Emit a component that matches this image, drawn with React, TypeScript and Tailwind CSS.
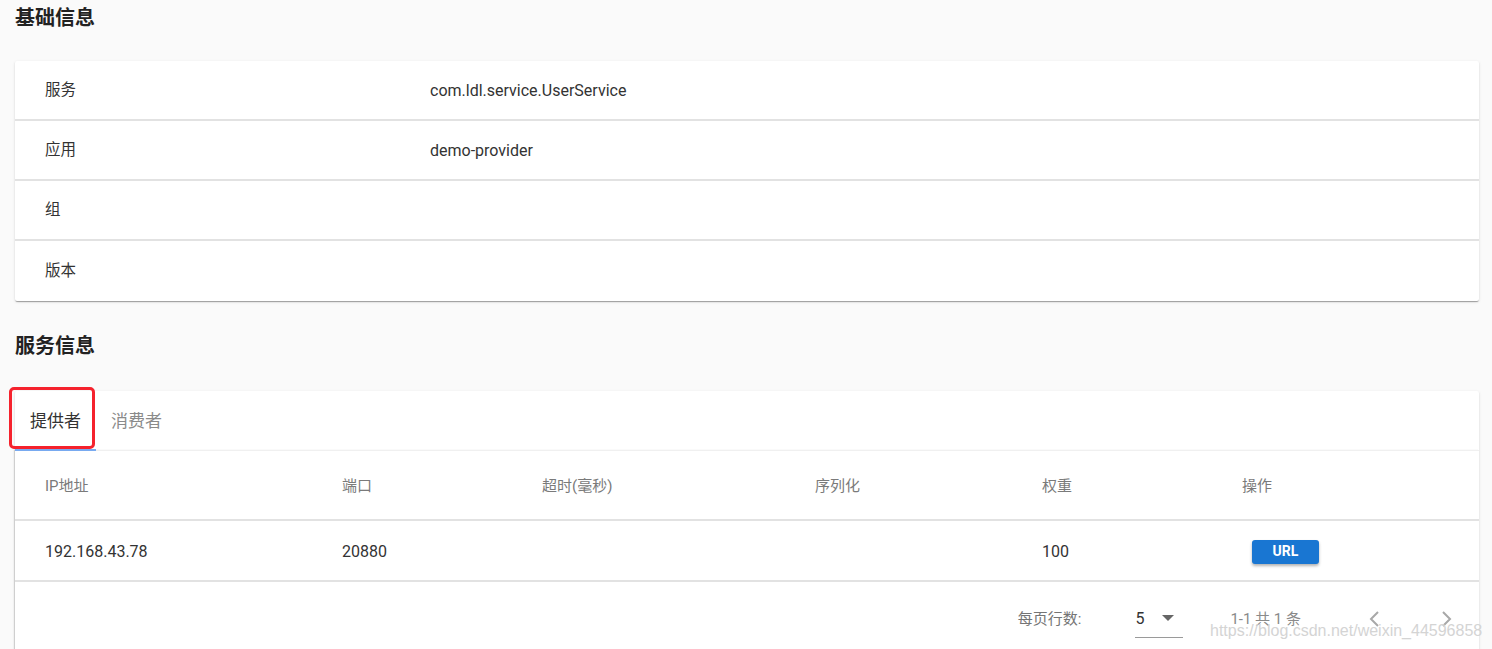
import React from "react";

const font = { fontFamily: "Roboto, 'Noto Sans CJK SC', sans-serif" };

const cardShadow =
  "shadow-[0_2px_1px_-1px_rgba(0,0,0,0.2),0_1px_1px_0_rgba(0,0,0,0.14),0_1px_3px_0_rgba(0,0,0,0.12)]";

function InfoRow({ label, value, last }: { label: string; value?: string; last?: boolean }) {
  return (
    <div
      className={`flex items-center h-[60px] pt-[2px] ${last ? "" : "border-b-2 border-[#e2e2e2]"}`}
    >
      <div className="w-[415px] pl-[30px] text-[15.5px] text-[#333]">{label}</div>
      <div className="text-[16px] text-[#333]">{value}</div>
    </div>
  );
}

export default function App() {
  const cols = ["w-[297px]", "w-[200px]", "w-[273px]", "w-[227px]", "w-[200px]", "flex-1"];
  const headers = ["IP地址", "端口", "超时(毫秒)", "序列化", "权重", "操作"];
  return (
    <div className="relative min-h-[649px] bg-[#fafafa] overflow-hidden pl-[15px] pr-[13px]" style={font}>
      <h2 className="h-[36px] pt-[5px] text-[20px] font-bold text-[#222] leading-[26px]">基础信息</h2>
      <div className="h-[25px]" />
      <div className={`bg-white rounded-[2px] ${cardShadow}`}>
        <InfoRow label="服务" value="com.ldl.service.UserService" />
        <InfoRow label="应用" value="demo-provider" />
        <InfoRow label="组" />
        <InfoRow label="版本" last />
      </div>
      <h2 className="mt-[30px] h-[30px] text-[20px] font-bold text-[#222] leading-[30px]">服务信息</h2>
      <div className="h-[30px]" />
      <div className={`bg-white rounded-[2px] ${cardShadow}`}>
        <div className="flex h-[59px] pt-[2px]">
          <div className="relative flex items-center px-[15px] text-[17px] text-[#333]">
            提供者
            <div className="absolute left-0 right-0 bottom-[-1px] h-[2px] bg-[#78aaf0]" />
          </div>
          <div className="flex items-center px-[15px] text-[17px] text-[#8a8a8a]">消费者</div>
        </div>
        <div className="shadow-[-1px_0_1px_0_rgba(0,0,0,0.12)] border-t border-[#f0f0f0]">
          <div className="flex items-center h-[70px] pt-[2px] border-b-2 border-[#e2e2e2] pl-[30px]">
            {headers.map((h, i) => (
              <div key={h} className={`${cols[i]} text-[15px] text-[#7a7a7a]`}>
                {h}
              </div>
            ))}
          </div>
          <div className="flex items-center h-[61px] pt-[2px] border-b-2 border-[#e2e2e2] pl-[30px] text-[16px] text-[#333]">
            <div className={cols[0]}>192.168.43.78</div>
            <div className={cols[1]}>20880</div>
            <div className={cols[2]}></div>
            <div className={cols[3]}></div>
            <div className={cols[4]}>100</div>
            <div className={cols[5]}>
              <button className="ml-[10px] w-[67px] h-[24px] rounded-[3px] bg-[#1976d2] text-white text-[14px] font-bold shadow-[0_2px_3px_rgba(0,0,0,0.3)]">
                URL
              </button>
            </div>
          </div>
          <div className="flex items-center justify-end h-[72px] pt-[2px] text-[15px] text-[#757575]">
            <span>每页行数:</span>
            <div className="ml-[54px] w-[48px] h-[38px] relative flex items-center border-b border-[#9a9a9a] text-[#333] text-[16px]">
              <span>5</span>
              <span className="absolute left-[27px] top-[15px] w-0 h-0 border-l-[6px] border-r-[6px] border-t-[6px] border-l-transparent border-r-transparent border-t-[#666]" />
            </div>
            <span className="ml-[47px] text-[#8a8a8a]">1-1 共 1 条</span>
            <svg className="ml-[61px]" width="24" height="24" viewBox="0 0 24 24">
              <path d="M16 5 9 12l7 7" fill="none" stroke="#a8a8a8" strokeWidth="2" />
            </svg>
            <svg className="ml-[48px] mr-[21px]" width="24" height="24" viewBox="0 0 24 24">
              <path d="M9 5l7 7-7 7" fill="none" stroke="#a8a8a8" strokeWidth="2" />
            </svg>
          </div>
        </div>
      </div>
      <div className="absolute left-[9px] top-[387px] w-[86px] h-[62px] border-[3px] border-[#f5222d] rounded-[5px]" />
      <div
        className="absolute left-[1210px] top-[620px] text-[16px] text-[#d4d4d4] leading-[22px]"
        style={{ fontFamily: "'Liberation Sans', Arial, sans-serif" }}
      >
        https://blog.csdn.net/weixin_44596858
      </div>
    </div>
  );
}
